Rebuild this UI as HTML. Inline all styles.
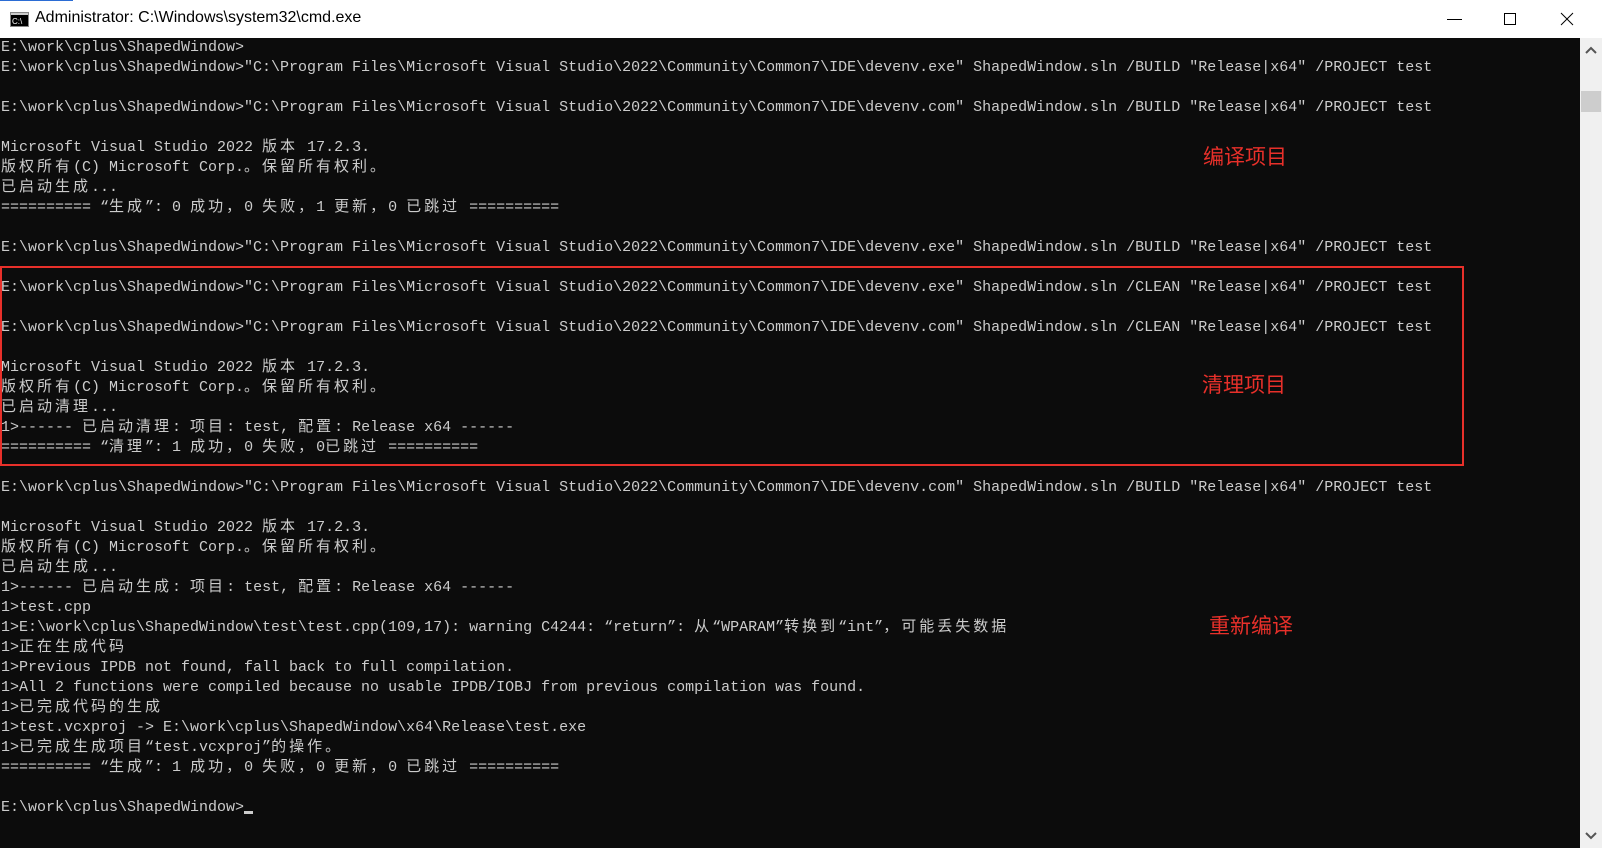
<!DOCTYPE html>
<html><head><meta charset="utf-8"><style>
html,body{margin:0;padding:0;width:1602px;height:848px;overflow:hidden;background:#fff;}
#title{position:absolute;left:0;top:0;width:1602px;height:38px;background:#fff;}
#title .t{position:absolute;left:35px;top:9px;font:16px "Liberation Sans",sans-serif;color:#000;}
#term{position:absolute;left:0;top:38px;width:1580px;height:810px;background:#0c0c0c;overflow:hidden;}
#lines{position:absolute;left:1px;top:0;font:15px/20px "Liberation Mono","Noto Sans CJK SC",monospace;color:#cccccc;}
#lines div{height:20px;white-space:pre;overflow:hidden;}
.c{font-family:"Noto Sans CJK SC",sans-serif;letter-spacing:3px;font-size:15px;line-height:15px;}
#sb{position:absolute;left:1580px;top:38px;width:22px;height:810px;background:#f0f0f0;}
.red{position:absolute;color:#e8302a;font:21px "Noto Sans CJK SC",sans-serif;}
#box{position:absolute;left:0;top:266px;width:1464px;height:200px;border:2px solid #e8302a;box-sizing:border-box;}
</style></head><body>
<div id="title">
<div style="position:absolute;left:0;top:0;width:73px;height:1px;background:#2b6cd4"></div>
<svg style="position:absolute;left:10px;top:12px" width="19" height="15"><rect x="0.5" y="0.5" width="18" height="14" fill="#000" stroke="#888"/><rect x="1" y="1" width="17" height="2" fill="#ccc"/><text x="2" y="12" font-size="8" font-family="Liberation Sans" fill="#fff">C:\</text></svg>
<div class="t">Administrator: C:\Windows\system32\cmd.exe</div>
<svg style="position:absolute;left:1446px;top:10px" width="140" height="20">
<line x1="1" y1="9.5" x2="16" y2="9.5" stroke="#000" stroke-width="1"/>
<rect x="58.5" y="3.5" width="11" height="11" fill="none" stroke="#000"/>
<line x1="115" y1="3" x2="127" y2="15" stroke="#000"/><line x1="127" y1="3" x2="115" y2="15" stroke="#000"/>
</svg>
</div>
<div id="term"><div id="lines"><div>E:\work\cplus\ShapedWindow></div><div>E:\work\cplus\ShapedWindow>"C:\Program Files\Microsoft Visual Studio\2022\Community\Common7\IDE\devenv.exe" ShapedWindow.sln /BUILD "Release|x64" /PROJECT test</div><div> </div><div>E:\work\cplus\ShapedWindow>"C:\Program Files\Microsoft Visual Studio\2022\Community\Common7\IDE\devenv.com" ShapedWindow.sln /BUILD "Release|x64" /PROJECT test</div><div> </div><div>Microsoft Visual Studio 2022 <span class="c">版本</span> 17.2.3.</div><div><span class="c">版权所有</span>(C) Microsoft Corp.<span class="c">。保留所有权利。</span></div><div><span class="c">已启动生成</span>...</div><div>========== “<span class="c">生成</span>”: 0 <span class="c">成功，</span>0 <span class="c">失败，</span>1 <span class="c">更新，</span>0 <span class="c">已跳过</span> ==========</div><div> </div><div>E:\work\cplus\ShapedWindow>"C:\Program Files\Microsoft Visual Studio\2022\Community\Common7\IDE\devenv.exe" ShapedWindow.sln /BUILD "Release|x64" /PROJECT test</div><div> </div><div>E:\work\cplus\ShapedWindow>"C:\Program Files\Microsoft Visual Studio\2022\Community\Common7\IDE\devenv.exe" ShapedWindow.sln /CLEAN "Release|x64" /PROJECT test</div><div> </div><div>E:\work\cplus\ShapedWindow>"C:\Program Files\Microsoft Visual Studio\2022\Community\Common7\IDE\devenv.com" ShapedWindow.sln /CLEAN "Release|x64" /PROJECT test</div><div> </div><div>Microsoft Visual Studio 2022 <span class="c">版本</span> 17.2.3.</div><div><span class="c">版权所有</span>(C) Microsoft Corp.<span class="c">。保留所有权利。</span></div><div><span class="c">已启动清理</span>...</div><div>1>------ <span class="c">已启动清理</span>: <span class="c">项目</span>: test, <span class="c">配置</span>: Release x64 ------</div><div>========== “<span class="c">清理</span>”: 1 <span class="c">成功，</span>0 <span class="c">失败，</span>0<span class="c">已跳过</span> ==========</div><div> </div><div>E:\work\cplus\ShapedWindow>"C:\Program Files\Microsoft Visual Studio\2022\Community\Common7\IDE\devenv.com" ShapedWindow.sln /BUILD "Release|x64" /PROJECT test</div><div> </div><div>Microsoft Visual Studio 2022 <span class="c">版本</span> 17.2.3.</div><div><span class="c">版权所有</span>(C) Microsoft Corp.<span class="c">。保留所有权利。</span></div><div><span class="c">已启动生成</span>...</div><div>1>------ <span class="c">已启动生成</span>: <span class="c">项目</span>: test, <span class="c">配置</span>: Release x64 ------</div><div>1>test.cpp</div><div>1>E:\work\cplus\ShapedWindow\test\test.cpp(109,17): warning C4244: “return”: <span class="c">从</span>“WPARAM”<span class="c">转换到</span>“int”<span class="c">，可能丢失数据</span></div><div>1><span class="c">正在生成代码</span></div><div>1>Previous IPDB not found, fall back to full compilation.</div><div>1>All 2 functions were compiled because no usable IPDB/IOBJ from previous compilation was found.</div><div>1><span class="c">已完成代码的生成</span></div><div>1>test.vcxproj -> E:\work\cplus\ShapedWindow\x64\Release\test.exe</div><div>1><span class="c">已完成生成项目</span>“test.vcxproj”<span class="c">的操作。</span></div><div>========== “<span class="c">生成</span>”: 1 <span class="c">成功，</span>0 <span class="c">失败，</span>0 <span class="c">更新，</span>0 <span class="c">已跳过</span> ==========</div><div> </div><div>E:\work\cplus\ShapedWindow><span style="display:inline-block;width:9px;height:3px;background:#ccc;vertical-align:-3px"></span></div></div></div>
<div id="box"></div>
<div class="red" style="left:1203px;top:141px">编译项目</div>
<div class="red" style="left:1202px;top:369px">清理项目</div>
<div class="red" style="left:1209px;top:610px">重新编译</div>
<div id="sb">
<svg style="position:absolute;left:5px;top:8px" width="12" height="8"><polyline points="1,7 6,2 11,7" fill="none" stroke="#555" stroke-width="2"/></svg>
<div style="position:absolute;left:1px;top:53px;width:20px;height:21px;background:#cdcdcd"></div>
<svg style="position:absolute;left:5px;top:794px" width="12" height="8"><polyline points="1,1 6,6 11,1" fill="none" stroke="#555" stroke-width="2"/></svg>
</div>
</body></html>
